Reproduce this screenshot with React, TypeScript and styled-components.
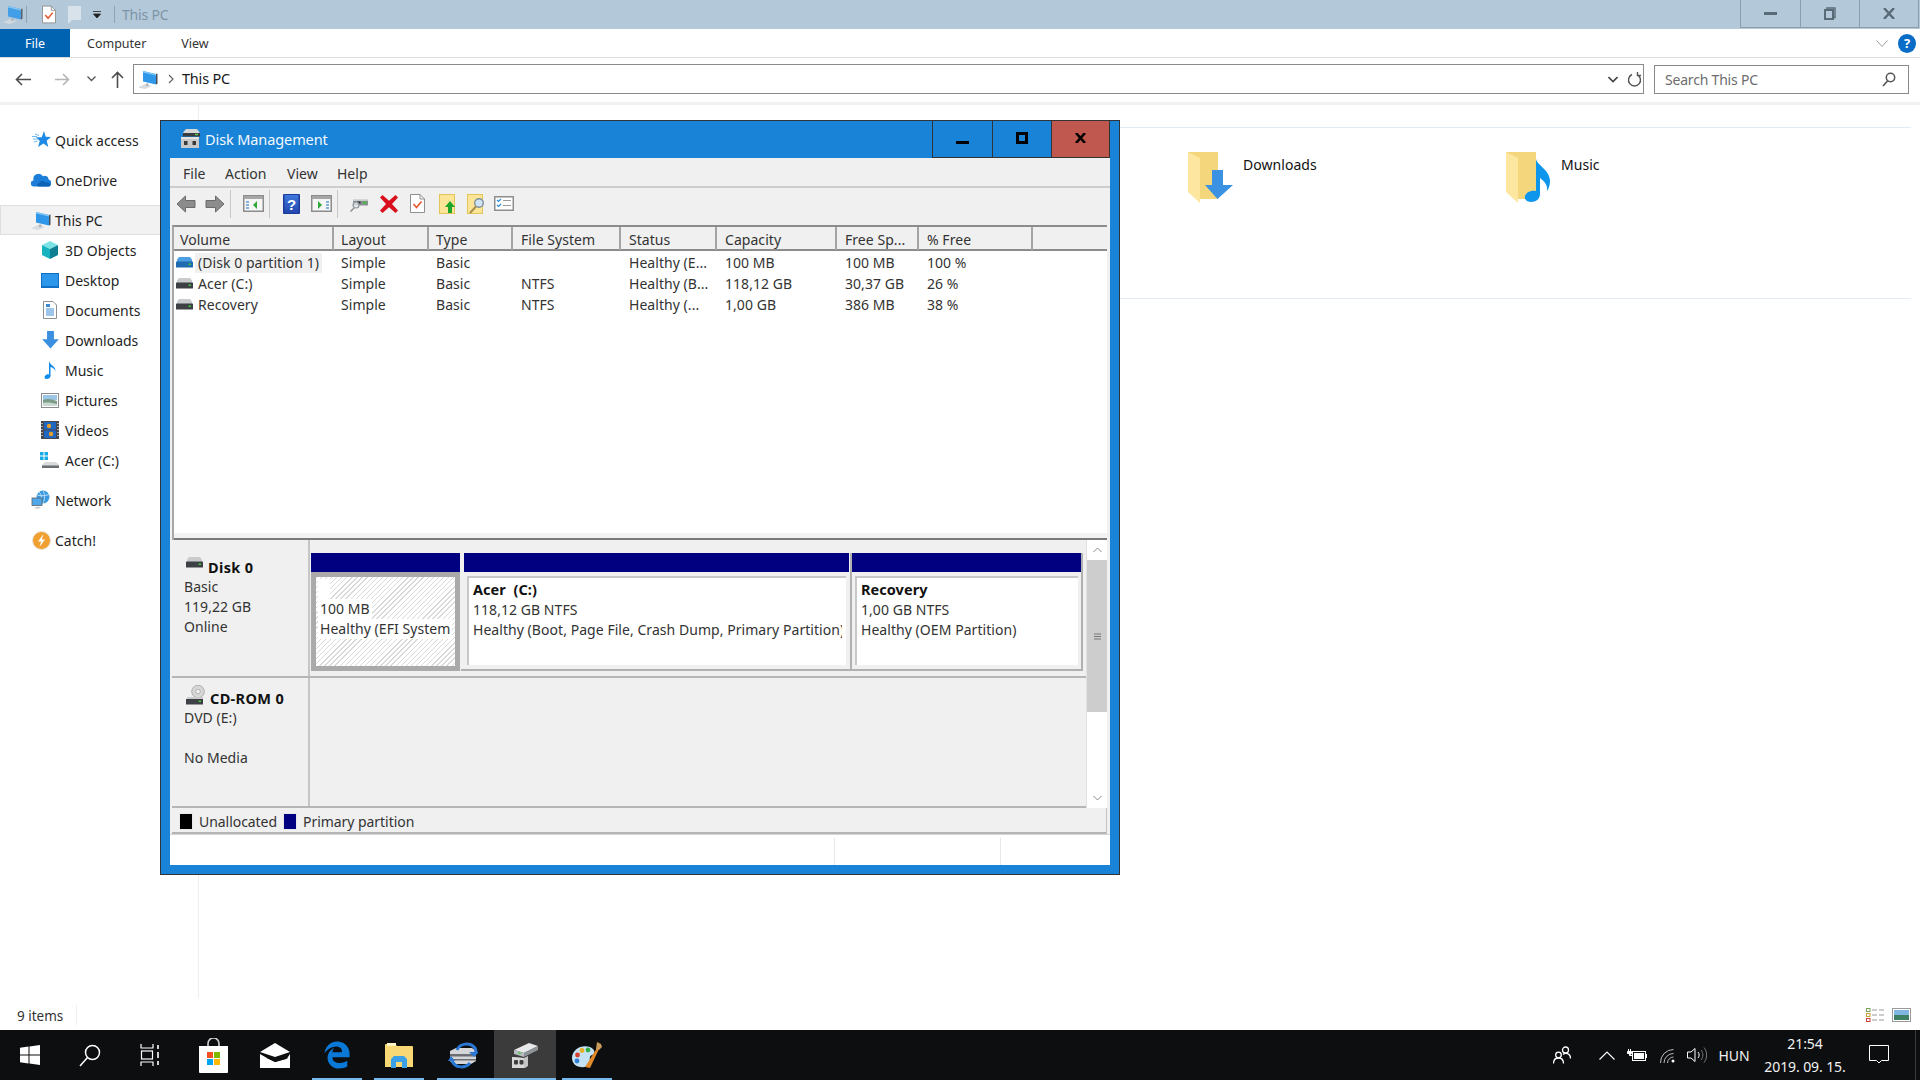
import React from 'react';
import styled, { createGlobalStyle } from 'styled-components';
import { FaEdgeLegacy } from 'react-icons/fa';

const Global = createGlobalStyle`
  * { box-sizing: border-box; }
  html, body { margin: 0; padding: 0; width: 1920px; height: 1080px; overflow: hidden; background: #fff; }
  body { font-family: "Noto Sans", "Open Sans", sans-serif; font-size: 14px; color: #1e1e1e; }
  svg { display: block; flex: none; }
`;

const Desktop = styled.div`position: relative; width: 1920px; height: 1080px; display: flex; flex-direction: column; overflow: hidden;`;

/* ---------- Explorer chrome ---------- */
const TitleBar = styled.div`height: 29px; background: #b3c8d9; display: flex; align-items: center; padding-left: 3px;`;
const QuickIcon = styled.span<{ $ml?: number }>`margin-left: ${p => p.$ml ?? 0}px; display: flex;`;
const TitleSep = styled.span<{ $ml: number }>`margin-left: ${p => p.$ml}px; width: 1px; height: 17px; background: #8fa3b3;`;
const TitleText = styled.span`margin-left: 7px; color: #7d95a8; font-size: 14px; letter-spacing: -.2px;`;
const Caption = styled.div`margin-left: auto; margin-right: 1px; align-self: flex-start; height: 28px; display: flex; border-bottom: 1px solid #8b9cab;`;
const CaptionBtn = styled.div<{ $w: number }>`width: ${p => p.$w}px; border-left: 1px solid #8b9cab; display: flex; align-items: center; justify-content: center; &:last-child { border-right: 1px solid #8b9cab; }`;

const Ribbon = styled.div`height: 29px; display: flex; border-bottom: 1px solid #dcdcdc; align-items: stretch;`;
const FileTab = styled.div`width: 70px; height: 28px; background: #0063b1; color: #fff; display: flex; align-items: center; justify-content: center; font-size: 12.5px;`;
const RibbonTab = styled.div<{ $ml: number }>`margin-left: ${p => p.$ml}px; display: flex; align-items: center; font-size: 12.5px; color: #333;`;
const RibbonRight = styled.div`margin-left: auto; margin-right: 4px; display: flex; align-items: center; gap: 10px;`;
const HelpDot = styled.span`width: 18px; height: 19px; border-radius: 50%; background: #0a6cc7; color: #fff; font-size: 13px; font-weight: 700; display: flex; align-items: center; justify-content: center;`;

const AddressRow = styled.div`height: 44px; padding-top: 6px; display: flex; align-items: flex-start;`;
const NavButtons = styled.div`width: 133px; height: 30px; display: flex; align-items: center; padding-left: 15px;`;
const NavGlyph = styled.span<{ $ml?: number }>`margin-left: ${p => p.$ml ?? 0}px; display: flex;`;
const AddressBox = styled.div`width: 1511px; height: 30px; border: 1px solid #8a8a8a; display: flex; align-items: center; padding: 0 1px 0 4px;`;
const Crumb = styled.span`margin-left: 8px; margin-top: -2px; font-size: 14.5px; color: #1a1a1a; letter-spacing: -.2px;`;
const BoxEnd = styled.div`margin-left: auto; display: flex; align-items: center; gap: 9px;`;
const SearchBox = styled.div`margin-left: 10px; margin-top: 1px; width: 255px; height: 29px; border: 1px solid #8a8a8a; display: flex; align-items: center; padding: 0 12px 0 10px;`;
const SearchHint = styled.span`color: #6d6d6d; font-size: 14px; letter-spacing: -.2px;`;
const RowRule = styled.div`height: 3px; background: #f1f1f1;`;

const Main = styled.div`flex: 1; display: flex; min-height: 0;`;
const NavPane = styled.nav`width: 199px; padding-top: 20px; border-right: 1px solid #eeeeee; margin-bottom: 7px;`;
const NavRow = styled.div<{ $indent: number; $sel?: boolean; $gap?: number; $iconGap?: number }>`
  height: 30px;
  margin-top: ${p => p.$gap ?? 0}px;
  padding-left: ${p => p.$indent}px;
  display: flex; align-items: center; gap: ${p => p.$iconGap ?? 5}px;
  font-size: 14px; color: #1f1f1f;
  ${p => p.$sel ? 'background:#f2f2f2; border:1px solid #dedede; padding-left:' + (p.$indent - 1) + 'px;' : ''}
`;
const NavIcon = styled.span`width: 18px; height: 20px; display: flex; align-items: center; justify-content: center;`;

const Content = styled.section`flex: 1; padding: 22px 9px 0 12px;`;
const Group = styled.div`height: 171px; border-top: 1px solid #e3ebf4; padding: 24px 0 0 977px; display: flex;`;
const GroupEnd = styled.div`border-top: 1px solid #e3ebf4;`;
const Folder = styled.div`width: 318px; display: flex; gap: 10px;`;
const FolderName = styled.span`font-size: 14px; line-height: 20px; margin-top: 3px; letter-spacing: .05px; color: #111;`;

const StatusStrip = styled.div`height: 25px; display: flex; padding-left: 17px; align-items: flex-start;`;
const ItemCount = styled.span`width: 60px; height: 20px; line-height: 22px; font-size: 13.5px; color: #333; border-right: 1px solid #f0f0f0;`;
const ViewIcons = styled.div`margin-left: auto; margin-right: 9px; margin-top: 3px; display: flex; gap: 8px;`;

/* ---------- Taskbar ---------- */
const Taskbar = styled.footer`height: 50px; background: #0d0e0f; display: flex; color: #fff; align-items: stretch;`;
const Slot = styled.div<{ $w: number; $ml?: number; $active?: boolean; $line?: 'inset' | 'flush' | 'none' }>`
  position: relative; width: ${p => p.$w}px; margin-left: ${p => p.$ml ?? 0}px;
  display: flex; align-items: center; justify-content: center;
  background: ${p => (p.$active ? '#3b3b3b' : 'transparent')};
  ${p => p.$line && p.$line !== 'none' ? `&::after { content: ''; position: absolute; bottom: 0; height: 2px; background: #76b9ed; left: ${p.$active ? 0 : 6}px; right: ${p.$line === 'flush' ? 0 : 6}px; }` : ''}
`;
const Tray = styled.div`margin-left: auto; width: 367px; display: flex; align-items: center;`;
const TrayItem = styled.div<{ $w: number; $ml?: number }>`width: ${p => p.$w}px; margin-left: ${p => p.$ml ?? 0}px; display: flex; flex-direction: column; align-items: center; justify-content: center; font-size: 14px; letter-spacing: -.1px; color: #f2f2f2; white-space: nowrap;`;
const ClockLine = styled.span`line-height: 23px; font-size: 14px;`;
const TrayEdge = styled.div`margin-left: 26px; width: 1px; height: 100%; background: #3a3a3a;`;

/* ---------- Disk Management window ---------- */
const Window = styled.div`position: absolute; left: 160px; top: 120px; width: 960px; height: 755px; border: 1px solid #333; background: #1883d7; padding: 0 9px 9px 9px; display: flex; flex-direction: column;`;
const WinTitle = styled.div`height: 37px; display: flex; align-items: center; padding: 0 0 2px 10px; flex: none;`;
const WinTitleText = styled.span`margin-left: 5px; color: #f4f9fd; font-size: 14.5px; letter-spacing: -.1px;`;
const WinButtons = styled.div`margin-left: auto; height: 37px; display: flex; align-self: flex-start;`;
const WinBtn = styled.div<{ $w: number; $close?: boolean }>`width: ${p => p.$w}px; border-left: 1px solid #333; border-bottom: 1px solid #333; ${p => p.$close ? 'background:#c0584f; border-right:1px solid #333;' : ''} display: flex; align-items: center; justify-content: center;`;
const BtnGlyph = styled.span<{ $lift: number }>`display: flex; margin-bottom: ${p => p.$lift}px;`;
const Client = styled.div`flex: 1; background: #f0f0f0; display: flex; flex-direction: column; min-height: 0;`;
const MenuBar = styled.div`height: 30px; padding: 2px 0 0 13px; border-bottom: 2px solid #cdcdcd; display: flex; align-items: center; flex: none; font-size: 14px; color: #333;`;
const MenuItem = styled.span<{ $w: number }>`width: ${p => p.$w}px;`;
const Toolbar = styled.div`height: 36px; flex: none; display: flex; align-items: center; padding: 0 0 5px 6px;`;
const ToolIcon = styled.span<{ $ml?: number }>`margin-left: ${p => p.$ml ?? 0}px; display: flex;`;
const ToolSep = styled.span<{ $ml: number }>`margin-left: ${p => p.$ml}px; width: 1px; height: 28px; background: #c8c8c8;`;
const Body = styled.div`flex: 1; min-height: 0; padding: 1px 3px 0 2px; display: flex; flex-direction: column; letter-spacing: .05px;`;

const ListFrame = styled.div`height: 315px; flex: none; display: flex; flex-direction: column; border-top: 2px solid #8c8c8c; border-left: 2px solid #a8a8a8;`;
const HeadRow = styled.div`height: 24px; flex: none; display: grid; grid-template-columns: 160px 95px 84px 108px 96px 120px 82px 114px 1fr; border-bottom: 2px solid #8c8c8c;`;
const HeadCell = styled.div<{ $first?: boolean }>`padding: 3px 0 0 ${p => (p.$first ? 6 : 8)}px; font-size: 14px; color: #333; border-right: 2px solid #a4a4a4; line-height: 20px; white-space: nowrap; &:nth-child(2), &:nth-child(3) { padding-left: 7px; } &:last-child { border-right: 0; }`;
const ListBody = styled.div`flex: 1; background: #fff; padding-top: 1px;`;
const DataRow = styled.div`height: 21.4px; display: grid; grid-template-columns: 160px 95px 84px 108px 96px 120px 82px 114px; align-items: center; font-size: 14px; color: #333; line-height: 20px; white-space: nowrap;`;
const DataCell = styled.div`padding-left: 8px; &:nth-child(2), &:nth-child(3) { padding-left: 7px; }`;
const VolumeCell = styled.div`padding-left: 2px; display: flex; align-items: center; gap: 2px;`;
const VolumeName = styled.span<{ $sel?: boolean }>`padding: 0 3px; ${p => p.$sel ? 'background:#f0f0f0;' : ''}`;
const Splitter = styled.div`height: 7px; flex: none; background: #f3f3f3; border-bottom: 2px solid #7a7a7a;`;

const Graph = styled.div`height: 268px; flex: none; display: flex;`;
const GraphRows = styled.div`flex: 1; display: flex; flex-direction: column;`;
const DiskRow = styled.div<{ $h: number }>`height: ${p => p.$h}px; display: flex; border-bottom: 2px solid #b6b6b6;`;
const DiskLabel = styled.div<{ $top: number }>`width: 138px; flex: none; padding: ${p => p.$top}px 0 0 12px; border-right: 2px solid #c6c6c6; font-size: 14px; line-height: 20px; color: #333;`;
const DiskTitle = styled.div`display: flex; align-items: center; gap: 5px; font-weight: 700; font-size: 14.5px; letter-spacing: .35px; color: #111; padding-left: 2px; height: 21px;`;
const IconLift = styled.span<{ $up: number }>`display: flex; margin-top: -${p => p.$up}px;`;
const PartRow = styled.div`flex: 1; display: flex; padding: 13px 0 0 1px; font-size: 14px; line-height: 20px; color: #333; height: 136px;`;
const Part = styled.div<{ $w: number; $pl: number; $pr: number; $edge?: boolean }>`
  width: ${p => p.$w}px; padding: 0 ${p => p.$pr}px 0 ${p => p.$pl}px; flex: none; height: 118px;
  ${p => p.$edge ? 'border-right: 2px solid #b0b0b0; border-bottom: 2px solid #b0b0b0;' : ''}
  display: flex; flex-direction: column;
`;
const PartHead = styled.div`height: 19px; background: #000080; flex: none;`;
const PartBox = styled.div<{ $mr: number }>`margin: 4px ${p => p.$mr}px 0 3px; height: 89px; background: #fff; border-top: 2px solid #c8c8c8; border-left: 2px solid #c8c8c8; padding: 2px 0 0 4px; white-space: nowrap; overflow: hidden;`;
const ClipLine = styled.div`width: 369px; overflow: hidden;`;
const EfiFrame = styled.div`flex: 1; border: 5px solid #aaaaaa; background: #fff;`;
const EfiHatch = styled.div`height: 100%; padding: 2px 0 0 2px; overflow: hidden; white-space: nowrap; background: repeating-linear-gradient(135deg, #dadada 0 1px, #ffffff 1px 3.6px);`;
const PatchLine = styled.div`width: fit-content; min-width: 12px; padding: 0 2px; background: #fff; color: #333;`;
const BoldLine = styled.div`font-weight: 700; font-size: 14.5px; color: #111; white-space: pre; margin: -1px 0 1px;`;
const Scroll = styled.div`width: 21px; flex: none; background: #fff; display: flex; flex-direction: column; border-left: 1px solid #e2e2e2;`;
const ScrollBtn = styled.div`height: 20px; flex: none; display: flex; align-items: center; justify-content: center;`;
const ScrollThumb = styled.div`height: 152px; flex: none; background: #cdcdcd; display: flex; align-items: center; justify-content: center;`;
const ScrollTrack = styled.div`flex: 1;`;

const Legend = styled.div`height: 26px; flex: none; display: flex; align-items: center; padding: 2px 0 0 7px; border-bottom: 2px solid #b4b4b4; border-right: 1px solid #c4c4c4; font-size: 14px; letter-spacing: -.05px; color: #333;`;
const Swatch = styled.span<{ $c: string; $ml?: number }>`width: 14px; height: 17px; background: ${p => p.$c}; margin-left: ${p => p.$ml ?? 0}px; margin-right: 6px; border: 1px solid #e8e8e8;`;
const WinStatus = styled.div`height: 31px; flex: none; background: #fff; border-top: 1px solid #d6d6d6; display: grid; grid-template-columns: 664px 166px 1fr; padding-top: 3px;`;
const StatusCell = styled.div`border-left: 1px solid #e8e8e8; &:first-child { border-left: 0; }`;

/* ---------- Icons ---------- */
const PcIcon = ({ o = 1 }: { o?: number }) => (
  <svg width="20" height="19" viewBox="0 0 20 19" opacity={o}>
    <path d="M0 17.500l7-3.400 7 1.800-7 3z" fill="#d8dcdf" />
    <path d="M8 13.500h2.500v2.500H8z" fill="#aeb4b8" />
    <path d="M5 1l13 3v10.500L5 11.500z" fill="#2e97ea" />
    <path d="M5 1l13 3v1.500L5 2.500z" fill="#83c8f6" />
    <path d="M18 4l1.500-.6v10.400l-1.500.7z" fill="#4b4f53" />
  </svg>
);
const StarIcon = () => (
  <svg width="19" height="18" viewBox="0 0 19 18">
    <path d="M12 0l1.700 5.800 5.300.2-4.300 3.700 1.600 6.300-4.800-3.600-5.500 3.600 1.800-6L4 6.300h5.700z" fill="#1f8ae6" />
    <path d="M0 5.500h5M1 8h4.500M3 3l4 1.500M2 11l3.500-1" stroke="#6fb7ef" strokeWidth="1" />
  </svg>
);
const CloudIcon = () => (
  <svg width="20" height="14" viewBox="0 0 20 14">
    <path d="M3 13.500a3 3 0 0 1-.4-6A5.200 5.200 0 0 1 12 3.300a3.800 3.800 0 0 1 5.600 3.300A3.500 3.500 0 0 1 17 13.500z" fill="#1b7fd9" />
    <path d="M8 13.500c-2.200 0-2.500-3 .3-3.500 1.200-2.300 4.300-2.600 5.800-.5 2-.6 5.100.2 5.400 2.200.2 1.100-.6 1.800-1.600 1.800z" fill="#0e62b6" />
  </svg>
);
const CubeIcon = () => (
  <svg width="18" height="18" viewBox="0 0 18 18">
    <path d="M9 0l8 4-8 4-8-4z" fill="#7be3e6" />
    <path d="M1 4l8 4v10l-8-4z" fill="#17b2bf" />
    <path d="M17 4L9 8v10l8-4z" fill="#0e7f93" />
  </svg>
);
const DesktopIcon = () => (
  <svg width="18" height="15" viewBox="0 0 18 15">
    <rect width="18" height="15" fill="#0e6fc4" />
    <rect x="1" y="1" width="16" height="12" fill="#2c97ea" />
  </svg>
);
const DocsIcon = () => (
  <svg width="14" height="18" viewBox="0 0 14 18">
    <path d="M.5.500h9.500l3.500 3.500v13.500H.5z" fill="#fff" stroke="#8a8f94" />
    <path d="M3 3h4v3H3z" fill="#3b8bd4" />
    <path d="M3 8h8M3 10h8M3 12h8M3 14h8" stroke="#3b8bd4" strokeWidth="1" />
  </svg>
);
const DownIcon = () => (
  <svg width="17" height="18" viewBox="0 0 17 18.400">
    <path d="M5 0h7v8.500h5L8.500 18 0 8.500h5z" fill="#3a8fe0" />
  </svg>
);
const NoteIcon = () => (
  <svg width="13" height="18" viewBox="0 0 13 18">
    <path d="M5 0c.5 4 7 5 6.500 10.500C11 8 8.500 6.500 6.500 6v9c0 2-2 3-4 3S0 16.500 1 15s2.500-2 4-1.600z" fill="#0f8ceb" />
  </svg>
);
const PicsIcon = () => (
  <svg width="18" height="15" viewBox="0 0 18 15">
    <rect x=".5" y=".5" width="17" height="14" fill="#fff" stroke="#8b8b8b" />
    <rect x="2" y="2" width="14" height="5" fill="#9cc6e5" />
    <path d="M2 7c4-2 9-1 14 1v5H2z" fill="#7d9c88" />
    <path d="M2 10c5-1 9 0 14 1v2H2z" fill="#c9d9d2" />
  </svg>
);
const FilmIcon = () => (
  <svg width="18" height="18" viewBox="0 0 18 18">
    <rect width="18" height="18" fill="#45494d" />
    <rect x="3" y="1" width="12" height="7.500" fill="#1f65c2" />
    <rect x="3" y="9.500" width="12" height="7.500" fill="#1f65c2" />
    <circle cx="8" cy="5" r="2.200" fill="#e6a028" />
    <circle cx="10" cy="13" r="2.200" fill="#e6a028" />
    <path d="M1 2v1M1 5v1M1 8v1M1 11v1M1 14v1M17 2v1M17 5v1M17 8v1M17 11v1M17 14v1" stroke="#e5e5e5" strokeWidth="1.200" />
  </svg>
);
const DriveC = () => (
  <svg width="20" height="17" viewBox="0 0 20 17">
    <path d="M0 0h3.500v3.500H0zM4.500 0H8v3.500H4.500zM0 4.500h3.500V8H0zM4.500 4.500H8V8H4.500z" fill="#19a9e5" />
    <path d="M2 13l3-3h11l3 3v2.500H2z" fill="#d8dadc" />
    <rect x="2" y="13.500" width="17" height="2.500" fill="#6b6f73" />
  </svg>
);
const NetIcon = () => (
  <svg width="20" height="20" viewBox="0 0 20 20">
    <circle cx="12" cy="7" r="6.500" fill="#3a9ae0" />
    <path d="M8 2c3 2 3 8 1 11M12 .5c2 3 2 9 0 12.500M6 5c4 1 8 1 12-.5" stroke="#b6dcf5" strokeWidth="1" fill="none" />
    <rect x="1" y="8" width="10" height="7.500" fill="#4fa8ea" stroke="#5c6166" strokeWidth=".8" />
    <path d="M3 18l4-1.500 3 1-3 1.500z" fill="#c9cdd0" />
  </svg>
);
const CatchIcon = () => (
  <svg width="19" height="19" viewBox="0 0 19 19">
    <circle cx="9.500" cy="9.500" r="9" fill="#f0a030" />
    <circle cx="9.500" cy="9.500" r="9" fill="none" stroke="#e9e3d7" strokeWidth="1" />
    <path d="M11.500 3L6 10.500h3.200L7.500 16l5.500-7.500H9.800z" fill="#fff" />
  </svg>
);
const FolderDl = () => (
  <svg width="45" height="51" viewBox="0 0 45 51">
    <path d="M0 0h30v47H10L0 36z" fill="#f4d67c" />
    <path d="M0 0l12 6v45L0 40z" fill="#fde69f" />
    <path d="M24 18h11v15h10L29.500 47 17 33h7z" fill="#3b92e3" />
  </svg>
);
const FolderMusic = () => (
  <svg width="45" height="51" viewBox="0 0 45 51">
    <path d="M0 0h30v47H10L0 36z" fill="#f4d67c" />
    <path d="M0 0l12 6v45L0 40z" fill="#fde69f" />
    <path d="M30 7c1 6 14 11 14 22 0 5-2 9-3 10 1-6-3-10-7-13v16c0 5-4 8-9 8-4 0-7-3-6-6s5-6 11-5z" fill="#0d96ec" />
  </svg>
);
const HddIcon = ({ blue }: { blue?: boolean }) => (
  <svg width="17" height="12" viewBox="0 0 17 12">
    <path d="M1 2.500L3 0h11l2 2.500v3H1z" fill={blue ? '#4c9fe2' : '#c9cbcd'} />
    <rect x="0" y="4.500" width="17" height="6" rx=".5" fill={blue ? '#1f6bb0' : '#3d4044'} />
    <rect x="12.500" y="6.500" width="2.500" height="1.500" fill="#3ec23a" />
  </svg>
);
const CdIcon = () => (
  <svg width="19" height="20" viewBox="0 0 19 20">
    <circle cx="12" cy="6.500" r="6.300" fill="#d6d6d6" stroke="#9c9c9c" strokeWidth=".7" />
    <circle cx="12" cy="6.500" r="2.200" fill="#f5f5f5" stroke="#9c9c9c" strokeWidth=".7" />
    <path d="M1 12h16v2H1z" fill="#c9cbcd" />
    <rect x="0" y="14" width="17" height="5.500" fill="#3d4044" />
    <rect x="12.500" y="15.500" width="2.500" height="1.500" fill="#3ec23a" />
  </svg>
);
const DmIcon = () => (
  <svg width="20" height="19" viewBox="0 0 20 19">
    <path d="M3 3.500L6 0h11l2.500 3v4H3z" fill="#d4d6d8" />
    <rect x="3" y="4" width="17" height="3.500" fill="#3a3d40" />
    <rect x="15" y="4.800" width="3" height="1.400" fill="#5ed255" />
    <path d="M1 8h18v11H1z" fill="#c9c9c9" />
    <path d="M1 8h18v2H1z" fill="#e3e3e3" />
    <rect x="4" y="12" width="3.500" height="4" fill="#3a3a3a" />
    <rect x="12.500" y="12" width="3.500" height="4" fill="#3a3a3a" />
  </svg>
);
const DmTaskIcon = () => (
  <svg width="28" height="25" viewBox="0 0 28 25">
    <path d="M3 7L18 0l9 3-14 7z" fill="#e6e8ea" />
    <path d="M3 7l10 3v4L3 11z" fill="#b8bcbf" />
    <path d="M13 10l14-7v4l-14 7z" fill="#8f9498" />
    <rect x="7" y="9.500" width="3" height="1.400" fill="#4fd04a" />
    <path d="M1 14l12 1 4-2v10l-3 2H1z" fill="#c4c4c4" />
    <path d="M1 14l12 1v10H1z" fill="#d8d8d8" />
    <rect x="3" y="17" width="4" height="4.500" rx="1" fill="#3e3e3e" />
    <rect x="8.500" y="17" width="4" height="4.500" rx="1" fill="#3e3e3e" />
  </svg>
);
const BlockArrow = ({ right }: { right?: boolean }) => (
  <svg width="20" height="18" viewBox="0 0 20 18" style={right ? { transform: 'scaleX(-1)' } : undefined}>
    <path d="M9.500 1L1 9l8.500 8v-4.500H19v-7H9.500z" fill="#8c8c8c" stroke="#6b6b6b" strokeWidth="1" />
  </svg>
);
const MmcPane = ({ flip }: { flip?: boolean }) => (
  <svg width="21" height="17" viewBox="0 0 21 17">
    <rect x=".75" y=".75" width="19.500" height="15.500" fill="#f6f6f6" stroke="#8c8c8c" strokeWidth="1.500" />
    <rect x="1" y="1" width="19" height="3" fill="#a6a6a6" />
    <path d={flip ? 'M15 7h3M15 10h3M15 13h3' : 'M3 7h3M3 10h3M3 13h3'} stroke="#5f9bd0" strokeWidth="1.600" />
    <path d={flip ? 'M7 6l4 4-4 4z' : 'M14 6l-4 4 4 4z'} fill="#2faa3a" />
  </svg>
);
const HelpBook = () => (
  <svg width="17" height="20" viewBox="0 0 17 20">
    <defs>
      <linearGradient id="bk" x1="0" y1="0" x2="0" y2="1"><stop offset="0" stopColor="#3f78dc" /><stop offset="1" stopColor="#2347ae" /></linearGradient>
    </defs>
    <rect width="17" height="20" rx="1" fill="#1c3a9c" />
    <rect x="1.500" y="1" width="14" height="18" fill="url(#bk)" />
    <text x="8.500" y="15.500" fontSize="15" fontWeight="700" fill="#fff" textAnchor="middle" fontFamily="Liberation Sans, sans-serif">?</text>
  </svg>
);
const ConnectIcon = () => (
  <svg width="19" height="16" viewBox="0 0 19 16">
    <path d="M.5 15.500L5 11" stroke="#8f8f8f" strokeWidth="1.500" />
    <path d="M3 3h15v6.500H3z" fill="#8b8f93" />
    <path d="M3 3h15v1.800H3z" fill="#d5d7d9" />
    <rect x="7" y="5.500" width="3.500" height="2.200" fill="#2b2d2f" />
    <rect x="13" y="5.500" width="3.500" height="2.200" fill="#44bb3f" />
    <circle cx="6" cy="9" r="3" fill="#e8eef2" fillOpacity=".7" stroke="#8e979e" strokeWidth="1.200" />
  </svg>
);
const RedX = () => (
  <svg width="18" height="18" viewBox="0 0 18 18">
    <path d="M2.500 0L9 5.800 15.500 0 18 2.500 12 9l6 6.500-2.500 2.500L9 12.200 2.500 18 0 15.500 6 9 0 2.500z" fill="#d90f1c" />
  </svg>
);
const CheckDoc = ({ w = 15, h = 19 }: { w?: number; h?: number }) => (
  <svg width={w} height={h} viewBox="0 0 15 19">
    <path d="M.5.500H10l4.500 4.500v13.500H.5z" fill="#fff" stroke="#8f8f8f" />
    <path d="M10 .5V5h4.500" fill="none" stroke="#8f8f8f" />
    <path d="M3.500 10l3 3.500 5-6" fill="none" stroke="#e9562c" strokeWidth="1.600" />
  </svg>
);
const FolderUp = () => (
  <svg width="17" height="20" viewBox="0 0 17 20">
    <rect x=".5" y=".5" width="15" height="19" fill="#fde597" stroke="#e3c458" />
    <path d="M11 7l5 6h-3v6H9v-6H6z" fill="#1ea52a" />
  </svg>
);
const FolderFind = () => (
  <svg width="18" height="20" viewBox="0 0 18 20">
    <rect x=".5" y=".5" width="15" height="19" fill="#fde597" stroke="#e3c458" />
    <circle cx="12" cy="9" r="4.300" fill="#cfe5f5" stroke="#7e8f9c" strokeWidth="1.400" />
    <path d="M9 12.500L3 19" stroke="#a78e4a" strokeWidth="2" />
  </svg>
);
const PropList = () => (
  <svg width="20" height="15" viewBox="0 0 20 15">
    <rect x=".75" y=".75" width="18.500" height="13.500" fill="#fff" stroke="#8e8e8e" strokeWidth="1.500" />
    <path d="M3 4l1.500 1.500L7 3M3 9l1.500 1.500L7 8" fill="none" stroke="#2d8bd8" strokeWidth="1.200" />
    <path d="M9 4.500h8M9 9.500h8" stroke="#9c9c9c" strokeWidth="1.200" />
  </svg>
);
const StrokeIcon = ({ w, h, d, c, sw = 1.600 }: { w: number; h: number; d: string; c: string; sw?: number }) => (
  <svg width={w} height={h} viewBox={`0 0 ${w} ${h}`}>
    <path d={d} fill="none" stroke={c} strokeWidth={sw} />
  </svg>
);
const WinLogo = () => (
  <svg width="20" height="20" viewBox="0 0 20 20">
    <path d="M0 2.800L8.500 1.600v7.900H0zM9.500 1.500L20 0v9.500H9.500zM0 10.500h8.500v7.900L0 17.200zM9.500 10.500H20V20L9.500 18.500z" fill="#fff" />
  </svg>
);
const StoreBag = () => (
  <svg width="29" height="35" viewBox="0 0 29 35">
    <path d="M9 9V5.500a5.500 5.500 0 0 1 11 0V9" fill="none" stroke="#cfcfcf" strokeWidth="1.600" />
    <path d="M0 8h29v26a1 1 0 0 1-1 1H1a1 1 0 0 1-1-1z" fill="#fff" />
    <rect x="8" y="14" width="6" height="6" fill="#f25022" />
    <rect x="15" y="14" width="6" height="6" fill="#7fba00" />
    <rect x="8" y="21" width="6" height="6" fill="#00a4ef" />
    <rect x="15" y="21" width="6" height="6" fill="#ffb900" />
  </svg>
);
const MailIcon = () => (
  <svg width="30" height="25" viewBox="0 0 30 25">
    <path d="M0 9L15 0l15 9L15 14z" fill="#fff" />
    <path d="M0 11l7 4-7 0zM0 12l15 7 12-3.500L30 11v14H0z" fill="#fff" />
    <path d="M0 10.500l15 8.500 13-3.500-13-1z" fill="#0d0e0f" />
  </svg>
);
const ExplorerIcon = () => (
  <svg width="28" height="26" viewBox="0 0 28 26">
    <path d="M0 3a1 1 0 0 1 1-1h9l2 2h15a1 1 0 0 1 1 1v20H0z" fill="#f8d875" />
    <rect x="2" y="1" width="9" height="3" fill="#fff3c4" />
    <path d="M6 26v-9l3-3h10l3 3v9h-5v-6h-6v6z" fill="#3aa0e8" />
  </svg>
);
const RemoteIcon = () => (
  <svg width="30" height="27" viewBox="0 0 30 27">
    <path d="M2 9l6-3h16l4 3v10l-5 3H5l-3-3z" fill="#d4d6d8" />
    <path d="M2 12h26v2.500H2zM2 17h26v1.500H2z" fill="#6b6f73" />
    <path d="M9 8C12 1 22 0 27 6c1 2 1 3 1 5" fill="none" stroke="#2a78d4" strokeWidth="3" />
    <path d="M23 11h10l-5 5z" fill="#2a78d4" transform="translate(-2 -1)" />
    <path d="M22 21c-4 5-14 6-18-2" fill="none" stroke="#2a78d4" strokeWidth="3" />
    <path d="M0 19l3-5 4 5z" fill="#2a78d4" />
  </svg>
);
const PaletteIcon = () => (
  <svg width="30" height="28" viewBox="0 0 30 28">
    <path d="M0 17C0 8 10 3 18 6c5 2 6 7 2 8-3 1-2 4-2 6 0 4-4 7-9 6-5 0-9-4-9-9z" fill="#c5e2f4" />
    <circle cx="5.500" cy="14" r="2.400" fill="#d8402a" />
    <circle cx="10" cy="9.500" r="2.400" fill="#e8b020" />
    <circle cx="16" cy="9" r="2.400" fill="#37ad4a" />
    <circle cx="5" cy="20" r="2.400" fill="#2f7ed8" />
    <path d="M13 26L25 7l2 1-9 19z" fill="#e08a2a" />
    <path d="M24 8l1-7 4 2 1 3-3 3z" fill="#c99a5a" />
  </svg>
);
const rows = [
  { name: '(Disk 0 partition 1)', sel: true, cols: ['Simple', 'Basic', '', 'Healthy (E...', '100 MB', '100 MB', '100 %'] },
  { name: 'Acer (C:)', cols: ['Simple', 'Basic', 'NTFS', 'Healthy (B...', '118,12 GB', '30,37 GB', '26 %'] },
  { name: 'Recovery', cols: ['Simple', 'Basic', 'NTFS', 'Healthy (...', '1,00 GB', '386 MB', '38 %'] },
];
const heads = ['Volume', 'Layout', 'Type', 'File System', 'Status', 'Capacity', 'Free Sp...', '% Free', ''];

const navTop = [
  { label: 'Quick access', icon: <StarIcon />, gap: 0 },
  { label: 'OneDrive', icon: <CloudIcon />, gap: 10 },
];
const navSub = [
  { label: '3D Objects', icon: <CubeIcon /> },
  { label: 'Desktop', icon: <DesktopIcon /> },
  { label: 'Documents', icon: <DocsIcon /> },
  { label: 'Downloads', icon: <DownIcon /> },
  { label: 'Music', icon: <NoteIcon /> },
  { label: 'Pictures', icon: <PicsIcon /> },
  { label: 'Videos', icon: <FilmIcon /> },
  { label: 'Acer (C:)', icon: <DriveC /> },
];

export default function App() {
  return (
    <Desktop>
      <Global />
      <TitleBar>
        <PcIcon o={.85} />
        <TitleSep $ml={3} />
        <QuickIcon $ml={15}><CheckDoc w={14} h={19} /></QuickIcon>
        <QuickIcon $ml={12}>
          <svg width="13" height="18" viewBox="0 0 13 18"><path d="M0 0h13v14H4l-4 4z" fill="#d7e2eb" /></svg>
        </QuickIcon>
        <QuickIcon $ml={12}>
          <svg width="8" height="8" viewBox="0 0 8 8"><path d="M0 .5h8M.5 3h7L4 7z" stroke="#222" strokeWidth=".8" fill="#222" /></svg>
        </QuickIcon>
        <TitleSep $ml={13} />
        <TitleText>This PC</TitleText>
        <Caption>
          <CaptionBtn $w={60}><StrokeIcon w={13} h={3} d="M0 1.500h13" c="#5a6b78" sw={3} /></CaptionBtn>
          <CaptionBtn $w={59}>
            <svg width="12" height="13" viewBox="0 0 12 13"><path d="M3 2.500V1h8v9.500H9" fill="none" stroke="#5a6b78" strokeWidth="1.400" /><rect x="1" y="3" width="8" height="9" fill="none" stroke="#5a6b78" strokeWidth="2" /></svg>
          </CaptionBtn>
          <CaptionBtn $w={60}><StrokeIcon w={12} h={11} d="M1 0l10 11M11 0L1 11" c="#5a6b78" sw={2.400} /></CaptionBtn>
        </Caption>
      </TitleBar>

      <Ribbon>
        <FileTab>File</FileTab>
        <RibbonTab $ml={17}>Computer</RibbonTab>
        <RibbonTab $ml={35}>View</RibbonTab>
        <RibbonRight>
          <StrokeIcon w={12} h={7} d="M.5.500L6 6.500 11.500.500" c="#9a9a9a" sw={1} />
          <HelpDot>?</HelpDot>
        </RibbonRight>
      </Ribbon>

      <AddressRow>
        <NavButtons>
          <StrokeIcon w={16} h={13} d="M16 6.500H1.500M7 1L1.500 6.500 7 12" c="#4d4d4d" />
          <NavGlyph $ml={24}><StrokeIcon w={15} h={13} d="M0 6.500h13.500M8 1l5.500 5.500L8 12" c="#b5b5b5" /></NavGlyph>
          <NavGlyph $ml={17}><StrokeIcon w={9} h={6} d="M.5.500l4 4 4-4" c="#555" sw={1.300} /></NavGlyph>
          <NavGlyph $ml={15}><StrokeIcon w={13} h={17} d="M6.500 17V1.500M1 7l5.500-5.500L12 7" c="#4d4d4d" /></NavGlyph>
        </NavButtons>
        <AddressBox>
          <PcIcon />
          <QuickIcon $ml={10}><StrokeIcon w={6} h={10} d="M1 1l4 4-4 4" c="#666" sw={1.200} /></QuickIcon>
          <Crumb>This PC</Crumb>
          <BoxEnd>
            <StrokeIcon w={10} h={7} d="M.5 1l4.500 4.500L9.500 1" c="#444" />
            <svg width="15" height="16" viewBox="0 0 15 16"><path d="M5 3.500a6 6 0 1 0 5 0M10.500 1v3.500H14" fill="none" stroke="#555" strokeWidth="1.400" /></svg>
          </BoxEnd>
        </AddressBox>
        <SearchBox>
          <SearchHint>Search This PC</SearchHint>
          <BoxEnd>
            <svg width="14" height="15" viewBox="0 0 14 15"><circle cx="8.500" cy="5.500" r="4.200" fill="none" stroke="#555" strokeWidth="1.500" /><path d="M5.500 9L1 14" stroke="#555" strokeWidth="1.700" /></svg>
          </BoxEnd>
        </SearchBox>
      </AddressRow>
      <RowRule />

      <Main>
        <NavPane>
          {navTop.map(n => (
            <NavRow key={n.label} $indent={32} $gap={n.gap}>
              <NavIcon>{n.icon}</NavIcon>{n.label}
            </NavRow>
          ))}
          <NavRow $indent={32} $gap={10} $sel><NavIcon><PcIcon /></NavIcon>This PC</NavRow>
          {navSub.map(n => (
            <NavRow key={n.label} $indent={41} $iconGap={6}>
              <NavIcon>{n.icon}</NavIcon>{n.label}
            </NavRow>
          ))}
          <NavRow $indent={32} $gap={10}><NavIcon><NetIcon /></NavIcon>Network</NavRow>
          <NavRow $indent={32} $gap={10}><NavIcon><CatchIcon /></NavIcon>Catch!</NavRow>
        </NavPane>
        <Content>
          <Group>
            <Folder><FolderDl /><FolderName>Downloads</FolderName></Folder>
            <Folder><FolderMusic /><FolderName>Music</FolderName></Folder>
          </Group>
          <GroupEnd />
        </Content>
      </Main>

      <StatusStrip>
        <ItemCount>9 items</ItemCount>
        <ViewIcons>
          <svg width="18" height="14" viewBox="0 0 18 14">
            <rect x=".5" y=".5" width="3.500" height="3" fill="#fff" stroke="#7ba05b" />
            <rect x=".5" y="5.500" width="3.500" height="3" fill="#fff" stroke="#c9a13a" />
            <rect x=".5" y="10.500" width="3.500" height="3" fill="#fff" stroke="#c8453a" />
            <path d="M6 2h5M13 2h5M6 7h5M13 7h5M6 12h5M13 12h5" stroke="#9a9a9a" strokeWidth="1" />
          </svg>
          <svg width="19" height="14" viewBox="0 0 19 14">
            <rect x=".5" y=".5" width="18" height="13" fill="#fff" stroke="#9a9a9a" />
            <rect x="2" y="2" width="15" height="5" fill="#7fb6e2" />
            <rect x="2" y="7" width="15" height="5" fill="#3f7f63" />
          </svg>
        </ViewIcons>
      </StatusStrip>

      <Taskbar>
        <Slot $w={60}><WinLogo /></Slot>
        <Slot $w={60}>
          <svg width="22" height="23" viewBox="0 0 22 23"><circle cx="13.500" cy="8.500" r="7" fill="none" stroke="#fff" strokeWidth="1.500" /><path d="M8.500 13.500L1 22" stroke="#fff" strokeWidth="1.500" /></svg>
        </Slot>
        <Slot $w={60}>
          <svg width="20" height="24" viewBox="0 0 20 24"><path d="M1 5V1M13 5V1M1 23v-4M13 23v-4M.5 5h13M.5 19h13" stroke="#fff" strokeWidth="1.200" fill="none" /><rect x="1.500" y="8" width="11" height="8" fill="none" stroke="#fff" strokeWidth="1.200" /><path d="M18 2v4M18 9v6M18 18v4" stroke="#fff" strokeWidth="1.600" /></svg>
        </Slot>
        <Slot $w={62} $ml={2}><StoreBag /></Slot>
        <Slot $w={62}><MailIcon /></Slot>
        <Slot $w={62} $line="inset"><FaEdgeLegacy size={28} color="#0a78d6" /></Slot>
        <Slot $w={62} $line="inset"><ExplorerIcon /></Slot>
        <Slot $w={63} $ml={1} $line="flush"><RemoteIcon /></Slot>
        <Slot $w={62} $active $line="flush"><DmTaskIcon /></Slot>
        <Slot $w={62} $line="inset"><PaletteIcon /></Slot>
        <Tray>
          <TrayItem $w={18}>
            <svg width="18" height="18" viewBox="0 0 18 18"><circle cx="12.500" cy="4" r="3" fill="none" stroke="#fff" strokeWidth="1.300" /><circle cx="5.500" cy="9" r="2.800" fill="none" stroke="#fff" strokeWidth="1.300" /><path d="M.5 17.500c0-4 2-5.500 5-5.500s5 1.500 5 5.500M10 8.500c1-1 1.500-1.200 2.500-1.200 3 0 5 1.800 5 5.200" fill="none" stroke="#fff" strokeWidth="1.300" /></svg>
          </TrayItem>
          <TrayItem $w={16} $ml={28}><StrokeIcon w={16} h={9} d="M.5 8.500l7.500-7.500 7.500 7.500" c="#fff" sw={1.200} /></TrayItem>
          <TrayItem $w={20} $ml={12}>
            <svg width="20" height="13" viewBox="0 0 20 13"><rect x="5.500" y="2.500" width="13" height="9" fill="#0d0e0f" stroke="#fff" /><rect x="7" y="4" width="10" height="6" fill="#fff" /><rect x="19" y="5" width="1" height="4" fill="#fff" /><path d="M1.500 0v2.500M3.500 0v2.500M.5 2.500h4v2h-4zM2.500 4.500v2H5.500" stroke="#fff" strokeWidth="1" fill="#fff" /></svg>
          </TrayItem>
          <TrayItem $w={15} $ml={13}>
            <svg width="15" height="15" viewBox="0 0 15 15"><circle cx="13" cy="13" r="1.500" fill="#fff" /><path d="M.5 15A13 13 0 0 1 13.500 1.500M4 15a9.500 9.500 0 0 1 9.500-9.500M7.500 15a6 6 0 0 1 6-6" fill="none" stroke="#bdbdbd" strokeWidth="1" /></svg>
          </TrayItem>
          <TrayItem $w={20} $ml={12}>
            <svg width="20" height="16" viewBox="0 0 20 16"><path d="M.5 5h3.500L8 1.500v13L4 11H.5z" fill="none" stroke="#fff" strokeWidth="1" /><path d="M11 5c1.500 1.500 1.500 4.500 0 6" fill="none" stroke="#fff" strokeWidth="1" /><path d="M14 3c2.500 3 2.500 7 0 10M17 .5c3.500 4 3.500 11 0 15" fill="none" stroke="#777" strokeWidth="1" /></svg>
          </TrayItem>
          <TrayItem $w={32} $ml={11}>HUN</TrayItem>
          <TrayItem $w={86} $ml={12}><ClockLine>21:54</ClockLine><ClockLine>2019. 09. 15.</ClockLine></TrayItem>
          <TrayItem $w={20} $ml={21}>
            <svg width="20" height="20" viewBox="0 0 20 20"><path d="M.5.500h19v15h-7L10 18l-2.500-2.500h-7z" fill="none" stroke="#fff" strokeWidth="1" /></svg>
          </TrayItem>
          <TrayEdge />
        </Tray>
      </Taskbar>

      <Window>
        <WinTitle>
          <DmIcon />
          <WinTitleText>Disk Management</WinTitleText>
          <WinButtons>
            <WinBtn $w={60}><StrokeIcon w={13} h={9} d="M0 7.500h13" c="#000" sw={3} /></WinBtn>
            <WinBtn $w={59}>
              <BtnGlyph $lift={2}><svg width="12" height="12" viewBox="0 0 12 12"><rect x="1.500" y="1.500" width="9" height="9" fill="none" stroke="#000" strokeWidth="3" /></svg></BtnGlyph>
            </WinBtn>
            <WinBtn $w={59} $close>
              <BtnGlyph $lift={2}><svg width="11" height="10" viewBox="0 0 11 10"><path d="M1 0l9 10M10 0L1 10" stroke="#000" strokeWidth="2.600" /></svg></BtnGlyph>
            </WinBtn>
          </WinButtons>
        </WinTitle>
        <Client>
          <MenuBar>
            <MenuItem $w={42}>File</MenuItem>
            <MenuItem $w={62}>Action</MenuItem>
            <MenuItem $w={50}>View</MenuItem>
            <MenuItem $w={40}>Help</MenuItem>
          </MenuBar>
          <Toolbar>
            <BlockArrow />
            <ToolIcon $ml={9}><BlockArrow right /></ToolIcon>
            <ToolSep $ml={5} />
            <ToolIcon $ml={12}><MmcPane /></ToolIcon>
            <ToolSep $ml={5} />
            <ToolIcon $ml={13}><HelpBook /></ToolIcon>
            <ToolIcon $ml={11}><MmcPane flip /></ToolIcon>
            <ToolSep $ml={5} />
            <ToolIcon $ml={12}><ConnectIcon /></ToolIcon>
            <ToolIcon $ml={11}><RedX /></ToolIcon>
            <ToolIcon $ml={12}><CheckDoc /></ToolIcon>
            <ToolIcon $ml={14}><FolderUp /></ToolIcon>
            <ToolIcon $ml={11}><FolderFind /></ToolIcon>
            <ToolIcon $ml={9}><PropList /></ToolIcon>
          </Toolbar>
          <Body>
            <ListFrame>
              <HeadRow>
                {heads.map((h, i) => <HeadCell key={i} $first={i === 0}>{h}</HeadCell>)}
              </HeadRow>
              <ListBody>
                {rows.map(r => (
                  <DataRow key={r.name}>
                    <VolumeCell>
                      <HddIcon blue={r.sel} />
                      <VolumeName $sel={r.sel}>{r.name}</VolumeName>
                    </VolumeCell>
                    {r.cols.map((c, i) => <DataCell key={i}>{c}</DataCell>)}
                  </DataRow>
                ))}
              </ListBody>
              <Splitter />
            </ListFrame>

            <Graph>
              <GraphRows>
                <DiskRow $h={138}>
                  <DiskLabel $top={16}>
                    <DiskTitle><IconLift $up={7}><HddIcon /></IconLift>Disk 0</DiskTitle>
                    <div>Basic</div>
                    <div>119,22 GB</div>
                    <div>Online</div>
                  </DiskLabel>
                  <PartRow>
                    <Part $w={150} $pl={0} $pr={1}>
                      <PartHead />
                      <EfiFrame>
                        <EfiHatch>
                          <PatchLine>&nbsp;</PatchLine>
                          <PatchLine>100 MB</PatchLine>
                          <PatchLine>Healthy (EFI System</PatchLine>
                        </EfiHatch>
                      </EfiFrame>
                    </Part>
                    <Part $w={391} $pl={3} $pr={1} $edge>
                      <PartHead />
                      <PartBox $mr={3}>
                        <BoldLine>Acer  (C:)</BoldLine>
                        <div>118,12 GB NTFS</div>
                        <ClipLine>Healthy (Boot, Page File, Crash Dump, Primary Partition)</ClipLine>
                      </PartBox>
                    </Part>
                    <Part $w={231} $pl={0} $pr={0} $edge>
                      <PartHead />
                      <PartBox $mr={3}>
                        <BoldLine>Recovery</BoldLine>
                        <div>1,00 GB NTFS</div>
                        <div>Healthy (OEM Partition)</div>
                      </PartBox>
                    </Part>
                  </PartRow>
                </DiskRow>
                <DiskRow $h={130}>
                  <DiskLabel $top={9}>
                    <DiskTitle><IconLift $up={6}><CdIcon /></IconLift>CD-ROM 0</DiskTitle>
                    <div>DVD (E:)</div>
                    <div>&nbsp;</div>
                    <div>No Media</div>
                  </DiskLabel>
                </DiskRow>
              </GraphRows>
              <Scroll>
                <ScrollBtn><StrokeIcon w={9} h={6} d="M.5 5l4-4 4 4" c="#8a8a8a" sw={1} /></ScrollBtn>
                <ScrollThumb><StrokeIcon w={7} h={7} d="M0 1h7M0 3.500h7M0 6h7" c="#777" sw={1} /></ScrollThumb>
                <ScrollTrack />
                <ScrollBtn><StrokeIcon w={9} h={6} d="M.5 1l4 4 4-4" c="#8a8a8a" sw={1} /></ScrollBtn>
              </Scroll>
            </Graph>

            <Legend>
              <Swatch $c="#000" />Unallocated
              <Swatch $c="#000080" $ml={6} />Primary partition
            </Legend>
          </Body>
          <WinStatus>
            <StatusCell /><StatusCell /><StatusCell />
          </WinStatus>
        </Client>
      </Window>
    </Desktop>
  );
}
